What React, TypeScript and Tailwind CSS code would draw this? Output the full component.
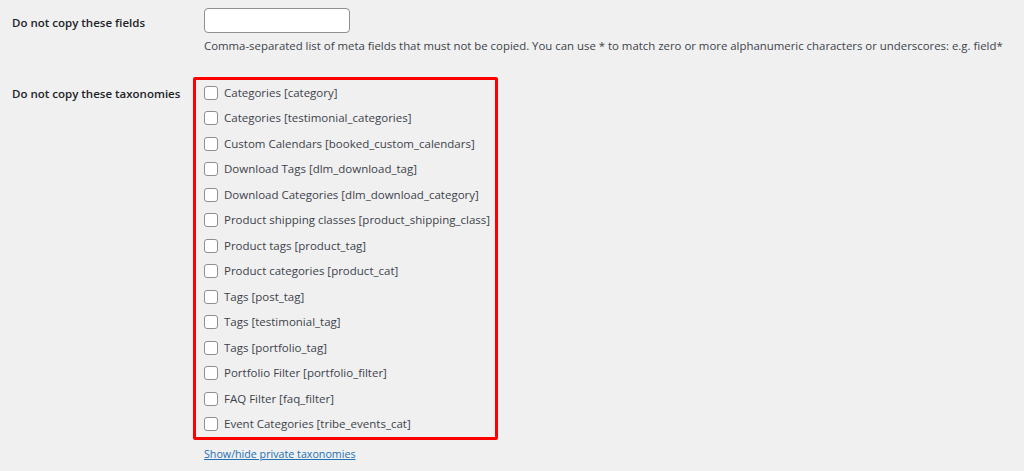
import React from "react";

const taxonomies = [
  "Categories [category]",
  "Categories [testimonial_categories]",
  "Custom Calendars [booked_custom_calendars]",
  "Download Tags [dlm_download_tag]",
  "Download Categories [dlm_download_category]",
  "Product shipping classes [product_shipping_class]",
  "Product tags [product_tag]",
  "Product categories [product_cat]",
  "Tags [post_tag]",
  "Tags [testimonial_tag]",
  "Tags [portfolio_tag]",
  "Portfolio Filter [portfolio_filter]",
  "FAQ Filter [faq_filter]",
  "Event Categories [tribe_events_cat]",
];

export default function App() {
  return (
    <div
      className="w-[1024px] h-[471px] overflow-hidden bg-[#f0f0f1] text-[#3c434a] text-[12px]"
      style={{ fontFamily: '"Open Sans", "Noto Sans", sans-serif' }}
    >
      {/* Fields row */}
      <div className="flex pt-[8px]">
        <div className="w-[204px] shrink-0 pl-[12px] pt-[6px] font-semibold text-[#1d2327] text-[11.5px]">
          Do not copy these fields
        </div>
        <div className="flex flex-col">
          <input
            type="text"
            className="w-[146px] h-[25px] bg-white border border-[#8c8f94] rounded-[4px]"
          />
          <p className="mt-[5px] leading-[16px] text-[11.4px] whitespace-nowrap">
            Comma-separated list of meta fields that must not be copied. You can use * to match zero or more
            alphanumeric characters or underscores: e.g. field*
          </p>
        </div>
      </div>

      {/* Taxonomies row */}
      <div className="flex mt-[23px]">
        <div className="w-[193px] shrink-0 pl-[12px] pt-[8px] font-semibold text-[#1d2327] text-[11.5px]">
          Do not copy these taxonomies
        </div>
        <div className="flex flex-col">
          <div className="w-[305px] border-[3px] border-[#ff0000] rounded-[2px] pl-[8px]">
            {taxonomies.map((t) => (
              <label key={t} className="flex items-center h-[25.5px] gap-[6px]">
                <span className="w-[14px] h-[14px] rounded-[3px] border border-[#8c8f94] bg-white shrink-0" />
                <span className="text-[11.5px] leading-[16px]">{t}</span>
              </label>
            ))}
          </div>
          <a href="#" className="mt-[6px] ml-[11px] text-[#2271b1] underline text-[10.7px]">
            Show/hide private taxonomies
          </a>
        </div>
      </div>
    </div>
  );
}
